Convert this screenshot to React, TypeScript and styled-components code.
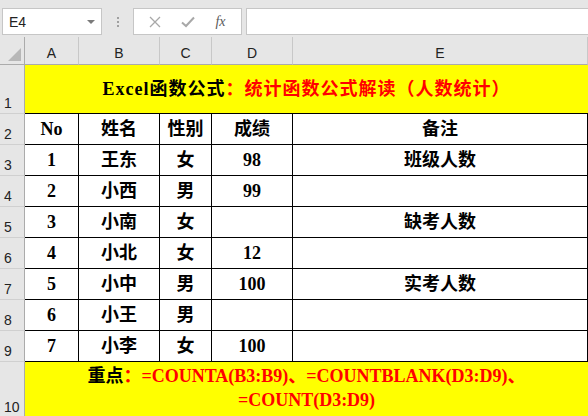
import React from "react";
import styled, { createGlobalStyle } from "styled-components";

const Global = createGlobalStyle`
  html, body {
    margin: 0;
    padding: 0;
    background: #ffffff;
    overflow: hidden;
  }
`;

const Window = styled.div`
  width: 588px;
  height: 416px;
  overflow: hidden;
  background: #ffffff;
`;

const FormulaBar = styled.div`
  display: flex;
  align-items: flex-start;
  height: 37px;
  padding: 8px 0 0 2px;
  box-sizing: border-box;
  background: #e6e6e6;
`;

const NameBox = styled.div`
  position: relative;
  display: flex;
  align-items: center;
  width: 100px;
  height: 27px;
  box-sizing: border-box;
  padding-left: 6px;
  background: #ffffff;
  border: 1px solid #c6c6c6;
  font-family: "Liberation Sans", Arial, sans-serif;
  font-size: 14px;
  color: #222;
`;

const DropArrow = styled.span`
  position: absolute;
  right: 6px;
  top: 11px;
  width: 0;
  height: 0;
  border-left: 4px solid transparent;
  border-right: 4px solid transparent;
  border-top: 4px solid #7a7a7a;
`;

const Grip = styled.div`
  display: flex;
  flex-direction: column;
  align-items: center;
  gap: 2px;
  width: 31px;
  padding-top: 9px;
`;

const GripDot = styled.span`
  width: 2px;
  height: 2px;
  background: #a0a0a0;
`;

const ButtonBox = styled.div`
  display: flex;
  align-items: center;
  justify-content: space-around;
  width: 109px;
  height: 27px;
  box-sizing: border-box;
  padding: 0 4px;
  background: #ffffff;
  border: 1px solid #c6c6c6;
`;

const IconSlot = styled.span`
  display: flex;
  align-items: center;
  justify-content: center;
  width: 28px;
  height: 20px;
`;

const Fx = styled.span`
  font-family: "Liberation Serif", "Times New Roman", serif;
  font-style: italic;
  font-size: 14px;
  color: #5a5a5a;
`;

const FormulaInput = styled.div`
  flex: 1;
  height: 27px;
  margin-left: 4px;
  box-sizing: border-box;
  background: #ffffff;
  border: 1px solid #c6c6c6;
  border-right: none;
`;

const Sheet = styled.div`
  display: grid;
  grid-template-columns: 25px 54px 81px 52px 81px 1fr;
  grid-template-rows: 28px 49px repeat(8, 31px) 56px;
`;

const Corner = styled.div`
  position: relative;
  background: #e6e6e6;
  border-right: 1px solid #ababab;
  border-bottom: 1px solid #ababab;
  box-sizing: border-box;

  &::after {
    content: "";
    position: absolute;
    right: 3px;
    bottom: 3px;
    width: 0;
    height: 0;
    border-left: 13px solid transparent;
    border-bottom: 13px solid #b7b7b7;
  }
`;

const ColHead = styled.div`
  display: flex;
  align-items: flex-end;
  justify-content: center;
  padding-bottom: 3px;
  box-sizing: border-box;
  background: #e6e6e6;
  border-right: 1px solid #c8c8c8;
  border-bottom: 1px solid #ababab;
  font-family: "Liberation Sans", Arial, sans-serif;
  font-size: 14px;
  color: #222;
`;

const RowHead = styled.div`
  display: flex;
  align-items: flex-end;
  padding: 0 0 2px 4px;
  box-sizing: border-box;
  background: #e6e6e6;
  border-right: 1px solid #ababab;
  border-bottom: 1px solid #d0d0d0;
  font-family: "Liberation Sans", Arial, sans-serif;
  font-size: 14px;
  color: #222;
`;

const Cell = styled.div<{ $span?: number; $yellow?: boolean; $noBottom?: boolean }>`
  grid-column: span ${(p) => p.$span ?? 1};
  display: flex;
  align-items: center;
  justify-content: center;
  text-align: center;
  box-sizing: border-box;
  background: ${(p) => (p.$yellow ? "#ffff00" : "#ffffff")};
  border-right: ${(p) => (p.$span ? "none" : "1px solid #000")};
  border-bottom: ${(p) => (p.$noBottom ? "none" : "1px solid #000")};
  font-family: "Liberation Serif", "Times New Roman", "Noto Sans CJK SC", serif;
  font-weight: bold;
  font-size: 18px;
  line-height: 24px;
  color: #000;
`;

const Title = styled.div`
  letter-spacing: 1px;
`;

const Red = styled.span`
  color: #ff0000;
`;

const Note = styled.div`
  width: 480px;
  padding-bottom: 4px;
`;

const CrossIcon = () => (
  <svg width="12" height="12" viewBox="0 0 12 12">
    <path d="M1 1 L11 11 M11 1 L1 11" stroke="#a8a8a8" strokeWidth="1.3" fill="none" />
  </svg>
);

const CheckIcon = () => (
  <svg width="14" height="12" viewBox="0 0 14 12">
    <path d="M1 6.5 L5 10 L13 1.5" stroke="#a8a8a8" strokeWidth="2" fill="none" />
  </svg>
);

const rows: [string, string, string, string, string][] = [
  ["No", "姓名", "性别", "成绩", "备注"],
  ["1", "王东", "女", "98", "班级人数"],
  ["2", "小西", "男", "99", ""],
  ["3", "小南", "女", "", "缺考人数"],
  ["4", "小北", "女", "12", ""],
  ["5", "小中", "男", "100", "实考人数"],
  ["6", "小王", "男", "", ""],
  ["7", "小李", "女", "100", ""],
];

export default function App() {
  return (
    <Window>
      <Global />
      <FormulaBar>
        <NameBox>
          E4
          <DropArrow />
        </NameBox>
        <Grip>
          <GripDot />
          <GripDot />
          <GripDot />
        </Grip>
        <ButtonBox>
          <IconSlot>
            <CrossIcon />
          </IconSlot>
          <IconSlot>
            <CheckIcon />
          </IconSlot>
          <IconSlot>
            <Fx>fx</Fx>
          </IconSlot>
        </ButtonBox>
        <FormulaInput />
      </FormulaBar>
      <Sheet>
        <Corner />
        {["A", "B", "C", "D", "E"].map((c) => (
          <ColHead key={c}>{c}</ColHead>
        ))}

        <RowHead>1</RowHead>
        <Cell $span={5} $yellow>
          <Title>
            Excel函数公式<Red>：统计函数公式解读（人数统计）</Red>
          </Title>
        </Cell>

        {rows.map((r, i) => (
          <React.Fragment key={i}>
            <RowHead>{i + 2}</RowHead>
            {r.map((v, j) => (
              <Cell key={j}>{v}</Cell>
            ))}
          </React.Fragment>
        ))}

        <RowHead>10</RowHead>
        <Cell $span={5} $yellow $noBottom>
          <Note>
            重点<Red>：=COUNTA(B3:B9)、=COUNTBLANK(D3:D9)、=COUNT(D3:D9)</Red>
          </Note>
        </Cell>
      </Sheet>
    </Window>
  );
}
